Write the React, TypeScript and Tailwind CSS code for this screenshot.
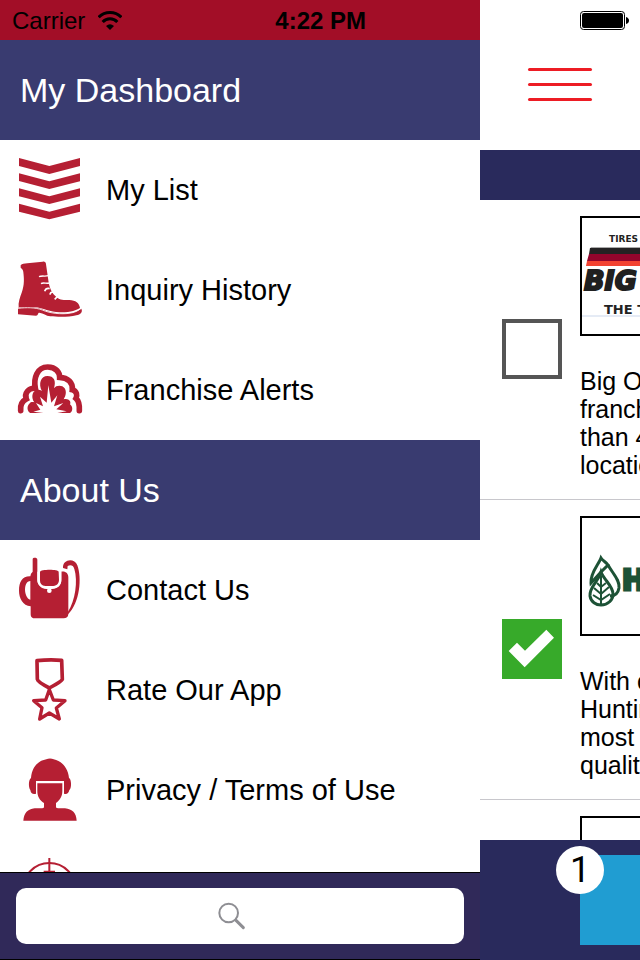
import { useState, ReactNode } from 'react';

type MenuEntry = {
  label: string;
  icon: ReactNode;
};

type Franchise = {
  id: string;
  name: string;
  logo: ReactNode;
  lines: string[];
  selected: boolean;
};

const MenuIcon = ({ children }: { children: ReactNode }) => (
  <svg
    className="h-[68px] w-[68px] shrink-0 text-[#b51f33]"
    viewBox="48 33 204 204"
    fill="currentColor"
    aria-hidden="true"
  >
    {children}
  </svg>
);

const ChevronsIcon = () => (
  <MenuIcon>
    <path d="M57 39L148 63L240 39V63L148 87L57 63Z" />
    <path d="M57 85L148 109L240 85V109L148 132L57 108Z" />
    <path d="M57 130L148 154L240 130V154L148 177L57 154Z" />
    <path d="M57 176L148 200L240 176V200L148 223L57 200Z" />
  </MenuIcon>
);

const BootIcon = () => (
  <MenuIcon>
    <path d="M62 61C66 56 73 56 82 55L128 50C134 49 138 52 138 58L144 99C147 122 151 139 166 153C178 166 190 165 208 165C227 166 238 174 240 189C229 195 212 203 178 202C151 201 128 189 105 186L56 187C54 172 60 157 65 143C74 119 72 99 70 82C70 76 67 72 62 68Z" />
    <path d="M54 188C78 185 105 184 126 193C151 205 184 208 206 205C224 203 235 197 244 191C249 201 242 208 229 211C206 217 172 216 151 214C137 212 131 205 118 203C113 203 115 211 108 212L54 208Z" />
    <g fill="none" stroke="#fff">
      <path strokeWidth="4" d="M117 95C126 91 135 95 145 92M123 116C130 111 139 117 148 114" />
      <path strokeWidth="5" d="M134 139Q138 128 149 131M150 149Q151 140 160 141M164 163L172 155" />
      <path strokeWidth="2.5" d="M54 190C80 187 106 187 127 195C152 206 184 208 207 205C224 203 235 197 242 191" />
    </g>
  </MenuIcon>
);

const BlastIcon = () => (
  <MenuIcon>
    <path
      fill="none"
      stroke="currentColor"
      strokeWidth="17"
      strokeLinecap="round"
      d="M62 197C60 179 67 168 79 162C72 145 86 128 106 130C100 100 111 66 143 66C169 66 179 83 179 97C204 98 219 113 217 134C231 137 232 153 228 160C238 169 239 180 238 197"
    />
    <path d="M91 204C81 199 80 183 88 176C94 169 98 171 103 172C93 160 96 140 108 136C117 132 124 136 126 139C114 116 123 93 142 93C162 93 169 107 162 130C169 120 187 120 194 130C200 140 198 152 191 163C204 158 215 169 210 178C219 184 219 199 210 204H172L200 199L169 193L190 174L162 184L172 151L154 173L145 121L140 173L120 155L129 184L108 174L121 194L100 200L130 204Z" />
  </MenuIcon>
);

const BackpackIcon = () => (
  <MenuIcon>
    <path d="M98 43C98 37 112 37 112 44V104C112 119 124 129 139 130H158C174 129 184 119 184 104V80C197 78 205 85 205 97V207C205 216 199 220 191 220H106C96 220 92 216 92 206V184C68 182 57 159 57 137C57 110 67 93 91 94L93 86L98 80ZM91 108C69 108 71 159 91 164Z" />
    <path d="M112 80H117V106C117 118 127 126 141 127H155C172 126 181 117 181 104V82L184 80V107C183 122 172 131 156 132H140C124 131 112 121 112 105Z" fill="#fff" />
    <path d="M120 81C120 73 176 72 176 81L177 104C177 114 172 121 160 123H136C125 121 120 116 120 107Z" />
    <circle cx="148" cy="137" r="7" fill="#fff" />
    <path d="M189 69C187 43 223 37 232 61C246 98 240 174 204 208V200C226 167 234 108 223 72C220 61 212 59 203 63L202 73Z" />
  </MenuIcon>
);

const MedalIcon = () => (
  <MenuIcon>
    <g fill="none" stroke="currentColor" strokeLinejoin="round">
      <path strokeWidth="11" d="M111 47Q148 43 185 46L187 103Q185 109 148 129Q113 111 112 103Z" />
      <path
        strokeWidth="10"
        d="M148 134L160 165L195 167L169 189L178 222L148 204L119 222L126 188L101 167L137 165Z"
      />
    </g>
  </MenuIcon>
);

const HeadsetIcon = () => (
  <MenuIcon>
    <path d="M93 99C96 64 116 47 139 43C145 40 155 40 161 43C185 48 204 68 207 99C215 103 215 130 208 135C206 146 199 149 192 146V108H108V146C99 149 92 145 91 135C85 128 85 104 93 99Z" />
    <path d="M112 115H187V138C187 155 179 166 168 174V187Q169 190 175 190H195C217 192 229 204 230 227H70C72 204 83 192 104 190H126Q132 190 132 186V174C119 166 112 154 112 138Z" />
  </MenuIcon>
);

const CrosshairIcon = () => (
  <MenuIcon>
    <g fill="none" stroke="currentColor" strokeWidth="6">
      <circle cx="148" cy="133" r="79" />
      <path d="M148 39V227M54 133H242M131 80H165" />
    </g>
  </MenuIcon>
);

const BigOLogo = () => (
  <svg className="h-full w-[226px]" viewBox="0 0 226 116" aria-label="Big O Tires">
    <text x="27" y="24" fontSize="9" className="fill-[#222] font-['DejaVu_Sans'] font-bold">
      TIRES BRAKES
    </text>
    <path fill="#aaa" d="M9 29H226V31H8Z" />
    <path fill="#242223" d="M8 30H226V36H7Z" />
    <path fill="#93052c" d="M7 36H226V43H5Z" />
    <path fill="#f34231" d="M5 43H226V48H4Z" />
    <text
      x="2"
      y="72"
      fontSize="27"
      strokeWidth="2"
      className="fill-[#202020] stroke-[#202020] font-['DejaVu_Sans'] font-bold italic"
    >
      BIG O
    </text>
    <text x="22" y="96" fontSize="13" className="fill-[#222] font-['DejaVu_Sans'] font-bold">
      THE TEAM
    </text>
    <path stroke="#e5ebf5" strokeWidth="2" d="M0 98H226" />
  </svg>
);

const HuntingtonLogo = () => (
  <svg className="h-full w-[226px]" viewBox="0 0 226 116" aria-label="Huntington">
    <g fill="none" stroke="#1d5236" strokeWidth="3">
      <path d="M19 40C17 46 8 55 9 65L19 54L26 47C24 44 21 43 19 40Z" />
      <path d="M26 47C31 56 38 62 37 70C36 76 32 78 28 78" />
      <path d="M19 54C16 64 7 69 8 78C9 84 14 87 19 87C26 87 31 82 31 76C31 68 22 62 19 54Z" />
      <path strokeWidth="2" d="M19 58V87M12 70L19 76L27 69M11 77L19 82L28 76M15 65L19 69L24 65" />
    </g>
    <text
      x="40"
      y="72"
      fontSize="28"
      strokeWidth="3"
      className="fill-[#1d5236] stroke-[#1d5236] font-['DejaVu_Sans'] font-bold"
    >
      HUNTINGTON
    </text>
  </svg>
);

const dashboardItems: MenuEntry[] = [
  { label: 'My List', icon: <ChevronsIcon /> },
  { label: 'Inquiry History', icon: <BootIcon /> },
  { label: 'Franchise Alerts', icon: <BlastIcon /> },
];

const aboutItems: MenuEntry[] = [
  { label: 'Contact Us', icon: <BackpackIcon /> },
  { label: 'Rate Our App', icon: <MedalIcon /> },
  { label: 'Privacy / Terms of Use', icon: <HeadsetIcon /> },
];

const initialFranchises: Franchise[] = [
  {
    id: 'big-o',
    name: 'Big O Tires',
    logo: <BigOLogo />,
    lines: ['Big O Tires', 'franchise', 'than 400', 'locations'],
    selected: false,
  },
  {
    id: 'huntington',
    name: 'Huntington',
    logo: <HuntingtonLogo />,
    lines: ['With over', 'Huntington', 'most', 'quality'],
    selected: true,
  },
  { id: 'next', name: 'Next franchise', logo: null, lines: [], selected: false },
];

const MenuSection = ({ title, items }: { title: string; items: MenuEntry[] }) => (
  <section>
    <h2 className="flex h-[100px] items-center bg-[#393b70] px-5 text-[34px] text-white">{title}</h2>
    <ul>
      {items.map((item) => (
        <li key={item.label}>
          <button type="button" className="flex h-[100px] w-full items-center gap-[22px] px-4 text-left text-[29px]">
            {item.icon}
            <span className="pt-0.5 whitespace-nowrap">{item.label}</span>
          </button>
        </li>
      ))}
    </ul>
  </section>
);

const FranchiseRow = ({ item, onToggle }: { item: Franchise; onToggle: (id: string) => void }) => (
  <li className="flex h-[300px] shrink-0 items-center gap-[18px] border-b border-[#c8c7cc] pl-[22px]">
    <div className="grid shrink-0 pb-0.5">
      <input
        type="checkbox"
        aria-label={item.name}
        checked={item.selected}
        onChange={() => onToggle(item.id)}
        className="col-start-1 row-start-1 h-[60px] w-[60px] appearance-none border-4 border-[#555] checked:border-[#37aa2a] checked:bg-[#37aa2a]"
      />
      {item.selected && (
        <svg className="pointer-events-none col-start-1 row-start-1 h-[60px] w-[60px]" viewBox="0 0 180 180">
          <path fill="#fff" d="M20 96L45 71L69 95L133 32L156 56L68 145Z" />
        </svg>
      )}
    </div>
    <div className="h-full shrink-0 pt-4">
      <div className="h-[120px] w-[230px] overflow-hidden border-2 border-black">{item.logo}</div>
      <p className="mt-[31px] text-[25px] leading-7">
        {item.lines.map((line) => (
          <span key={line} className="block whitespace-nowrap">
            {line}
          </span>
        ))}
      </p>
    </div>
  </li>
);

const App = () => {
  const [franchises, setFranchises] = useState(initialFranchises);
  const [query, setQuery] = useState('');

  const handleToggle = (id: string) => {
    setFranchises(franchises.map((f) => (f.id === id ? { ...f, selected: !f.selected } : f)));
  };

  const selectedCount = franchises.filter((f) => f.selected).length;

  return (
    <div className="flex h-screen overflow-hidden bg-white font-['Liberation_Sans',Arial,sans-serif] text-black">
      {/* Side menu */}
      <nav className="flex w-3/4 shrink-0 flex-col">
        <div className="flex h-10 shrink-0 items-center bg-[#a20e27] pt-0.5 pr-[114px] pl-3 text-2xl">
          <span>Carrier</span>
          <svg className="ml-[13px] h-5 w-6" viewBox="0 0 72 60" aria-hidden="true">
            <g fill="none" stroke="#000" strokeWidth="9">
              <path d="M2 19C20 0 52 0 70 19" />
              <path d="M14 33C26 20 46 20 58 33" />
            </g>
            <path d="M24 45Q36 34 48 45L36 57Z" />
          </svg>
          <span className="ml-auto font-bold">4:22 PM</span>
        </div>

        <div className="min-h-0 flex-1 overflow-hidden">
          <MenuSection title="My Dashboard" items={dashboardItems} />
          <MenuSection title="About Us" items={aboutItems} />
          <button type="button" aria-label="Find Franchises" className="flex h-[100px] w-full items-center px-4">
            <CrosshairIcon />
          </button>
        </div>

        <div className="shrink-0 border-y border-black bg-[#302959] px-4 py-[15px]">
          <div className="relative">
            <input
              type="search"
              aria-label="Search"
              value={query}
              onChange={(e) => setQuery(e.target.value)}
              className="block h-14 w-full rounded-[10px] bg-white px-4 text-2xl outline-none"
            />
            {!query && (
              <svg
                className="pointer-events-none absolute inset-y-0 right-4 left-0 m-auto h-7 w-7"
                viewBox="0 0 84 84"
                fill="none"
                stroke="#8e8e93"
                aria-hidden="true"
              >
                <circle cx="32" cy="33" r="28" strokeWidth="6" />
                <path strokeWidth="9" strokeLinecap="round" d="M54 55L76 77" />
              </svg>
            )}
          </div>
        </div>
      </nav>

      {/* Franchise list */}
      <main className="flex min-w-0 flex-1 flex-col overflow-hidden">
        <div className="flex h-10 shrink-0 items-center justify-end pr-[10px]">
          <svg className="h-5 w-[50px]" viewBox="0 0 50 20" aria-hidden="true">
            <rect x="0.5" y="1.5" width="44" height="18" rx="3" fill="none" stroke="#000" />
            <rect x="2" y="3" width="41" height="15" rx="2" />
            <path d="M46 7Q49 8 49 10.500Q49 13 46 14Z" />
          </svg>
        </div>
        <header className="h-[110px] shrink-0 pt-7 pl-12">
          <button type="button" aria-label="Menu" className="flex flex-col gap-3">
            <span className="h-[3px] w-16 rounded-full bg-[#ed1c24]" />
            <span className="h-[3px] w-16 rounded-full bg-[#ed1c24]" />
            <span className="h-[3px] w-16 rounded-full bg-[#ed1c24]" />
          </button>
        </header>
        <div className="h-[50px] shrink-0 bg-[#292a5c]" />

        <ul className="min-h-0 flex-1 overflow-hidden">
          {franchises.map((item) => (
            <FranchiseRow key={item.id} item={item} onToggle={handleToggle} />
          ))}
        </ul>

        <footer className="h-[120px] shrink-0 bg-[#292a5c] py-[15px] pl-[100px]">
          <div className="relative h-full">
            <button type="button" aria-label="Selected franchises" className="block h-full w-full bg-[#209dd2]" />
            <span className="pointer-events-none absolute -top-[9px] -left-6 flex h-12 w-12 items-center justify-center rounded-full bg-white font-[Roboto] text-4xl">
              {selectedCount}
            </span>
          </div>
        </footer>
      </main>
    </div>
  );
};

export default App;
